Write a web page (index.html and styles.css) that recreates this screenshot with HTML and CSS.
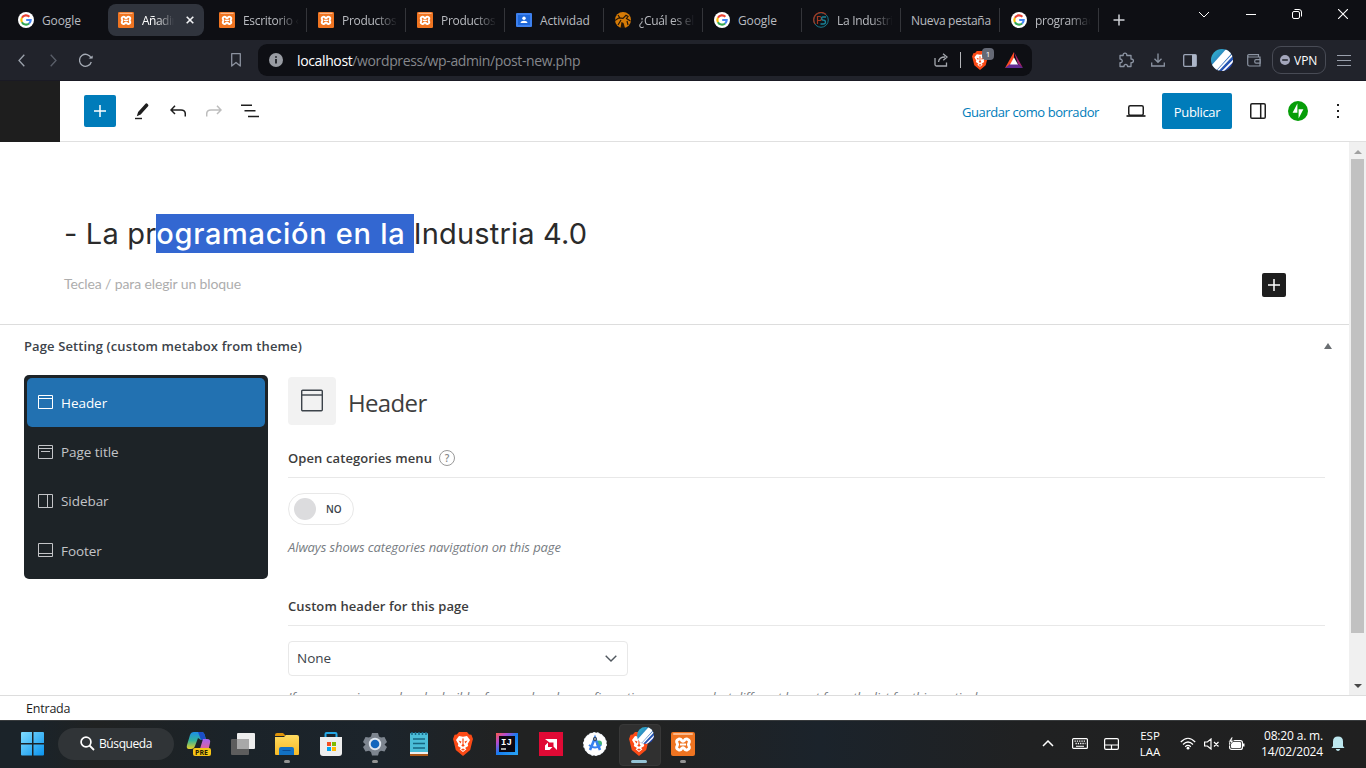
FILE: index.html
```html
<!DOCTYPE html>
<html lang="es">
<head>
<meta charset="utf-8">
<title>Añadir nueva entrada</title>
<link rel="stylesheet" href="styles.css">
</head>
<body>
<svg class="defs" width="0" height="0">
  <defs>
    <linearGradient id="blue" x1="0" y1="0" x2="1" y2="1"><stop offset="0" stop-color="#7fdcff"/><stop offset="1" stop-color="#0a93ee"/></linearGradient>
    <linearGradient id="profile" x1="0" y1="0" x2="1" y2="1"><stop offset=".2" stop-color="#2fa5c8"/><stop offset=".8" stop-color="#2547b0"/></linearGradient>
    <linearGradient id="ij" x1="0" y1="0" x2="1" y2="1"><stop offset="0" stop-color="#ff5b45"/><stop offset=".25" stop-color="#b34bd0"/><stop offset=".5" stop-color="#167cf0"/><stop offset="1" stop-color="#2ba7f5"/></linearGradient>
    <linearGradient id="cop1" x1="0" y1="0" x2="0" y2="1"><stop offset="0" stop-color="#1b8fe8"/><stop offset=".5" stop-color="#35b39a"/><stop offset="1" stop-color="#e8d024"/></linearGradient>
    <linearGradient id="cop2" x1="0" y1="0" x2="0" y2="1"><stop offset="0" stop-color="#a563f0"/><stop offset="1" stop-color="#f2657a"/></linearGradient>
    <linearGradient id="folder" x1="0" y1="0" x2="0" y2="1"><stop offset="0" stop-color="#ffdb60"/><stop offset="1" stop-color="#f7b925"/></linearGradient>
  </defs>
  <symbol id="google" viewBox="0 0 16 16"><circle cx="8" cy="8" r="8" fill="#fff"/><g fill="none" stroke-width="2.1"><path d="M11.4 4.8A4.7 4.7 0 0 0 3.9 5.8" stroke="#ea4335"/><path d="M3.9 5.8a4.7 4.7 0 0 0 0 4.4" stroke="#fbbc05"/><path d="M3.9 10.2a4.7 4.7 0 0 0 7.2 1.3" stroke="#34a853"/><path d="M11.1 11.5A4.7 4.7 0 0 0 12.7 8H8.2" stroke="#4285f4"/></g></symbol>
  <symbol id="xampp" viewBox="0 0 24 24"><rect width="24" height="24" rx="2" fill="#ef7421"/><rect x="2" y="1" width="20" height="2" rx="1" fill="#f9b78a"/><path d="M7.500 7.300q2.500-.8 3.300 1.400 1.200 1 2.400 0 .8-2.200 3.300-1.400 3 1.200 1.200 4.200-.7 1 0 2 1.800 3-1.200 4.200-2.500.8-3.300-1.400-1.200-1-2.400 0-.8 2.200-3.300 1.400-3-1.200-1.200-4.200.7-1 0-2-1.800-3 1.200-4.200z" fill="none" stroke="#fff" stroke-width="3" stroke-linejoin="round"/><path d="M9 12.500h6" stroke="#fff" stroke-width="2"/></symbol>
  <symbol id="brave" viewBox="0 0 20 24"><path d="M6 0h8l2.200 2.400 2.200.4L20 7l-.6 2-2.200 9L10 24l-7.200-6L.6 9 0 7l1.600-4.200 2.200-.4z" fill="#fb4a16"/><path d="M6 4l4 .8L14 4l3 4-2.300 4 .5 2-3.200 2 1.400 1.300L10 20l-3.400-2.700L8 16l-3.200-2 .5-2L3 8z" fill="#fff"/><path d="M5.500 8.500l3 1-1 2zM14.500 8.500l-3 1 1 2zM9.300 6.500h1.400L10.500 12l1.200 1.800L10 14.700l-1.700-.9L9.500 12zM8 17.500l2-1 2 1-2 1.300z" fill="#fb4a16"/></symbol>
  <symbol id="avatar" viewBox="0 0 22 22"><clipPath id="disc"><circle cx="11" cy="11" r="11"/></clipPath><g clip-path="url(#disc)"><path d="M0 0h22v22H0z" fill="url(#profile)"/><path d="M1 21L19 1" stroke="#fff" stroke-width="7"/><path d="M6.500 22L23 4.500M10 24L25 9" stroke="#fff" stroke-width="1.700"/></g></symbol>
</svg>

<div class="tabs">
  <div class="tab first"><svg class="fav"><use href="#google"/></svg><span>Google</span></div>
  <div class="tab active"><svg class="fav"><use href="#xampp"/></svg><span class="fade">Añadir</span><svg class="tabx" viewBox="0 0 8 8"><path d="M.7.700l6.600 6.600M7.300.700L.7 7.300" stroke="#f2f3f5" stroke-width="1.600"/></svg></div>
  <div class="tab line"><svg class="fav"><use href="#xampp"/></svg><span class="fade">Escritorio ‹</span></div>
  <div class="tab line"><svg class="fav"><use href="#xampp"/></svg><span class="fade">Productos</span></div>
  <div class="tab line"><svg class="fav"><use href="#xampp"/></svg><span class="fade">Productos</span></div>
  <div class="tab line"><svg class="fav" viewBox="0 0 16 16"><rect y="1" width="16" height="14" rx="1" fill="#3d80ee"/><rect x="2" y="3" width="12" height="10" fill="#1e67d8"/><circle cx="8" cy="6.300" r="1.700" fill="#fff"/><path d="M4.500 11c.3-3 6.700-3 7 0z" fill="#fff"/></svg><span class="soft">Actividad</span></div>
  <div class="tab line"><svg class="fav" viewBox="0 0 16 16"><circle cx="8" cy="8" r="8" fill="#d77b06"/><path d="M0 8.500l4-2.700 4 .5 3-3 2 1.200-1.500 2L15.500 9M5 6L3 3M3 13l3-5M12 9l1 4" fill="none" stroke="#241608" stroke-width="1.200"/><path d="M5.500 16l1-6 2 1 1.500 5z" fill="#241608"/></svg><span class="fade">¿Cuál es el</span></div>
  <div class="tab line"><svg class="fav"><use href="#google"/></svg><span>Google</span></div>
  <div class="tab line"><svg class="fav" viewBox="0 0 16 16"><circle cx="8" cy="8" r="7.300" fill="#101318" stroke="#18778a"/><path d="M2 12A7.300 7.300 0 0 1 13 2.500M4.500 12V4.500h2q2 0 2 2t-2 2h-2" fill="none" stroke="#a6371f" stroke-width="1.200"/><path d="M13 5H9.500Q7.800 6 9.500 8q3 0 3 2t-2 2H7.500" fill="none" stroke="#198398" stroke-width="1.300"/></svg><span class="fade">La Industri</span></div>
  <div class="tab line nofav"><span class="plain">Nueva pestaña</span></div>
  <div class="tab line"><svg class="fav"><use href="#google"/></svg><span class="fade">programac</span></div>
  <svg class="newtab" viewBox="0 0 12 12"><path d="M6 .5v11M.5 6h11" stroke="#d0d2d6" stroke-width="1.500"/></svg>
  <div class="winbtns">
    <svg width="12" height="7" viewBox="0 0 12 7"><path d="M1 1l5 5 5-5" fill="none" stroke="#fff"/></svg>
    <svg width="10" height="7" viewBox="0 0 10 7"><path d="M0 3.500h10" stroke="#fff"/></svg>
    <svg width="10" height="10" viewBox="0 0 10 10"><rect x=".5" y="2.500" width="7" height="7" rx="1.500" fill="none" stroke="#fff"/><path d="M2.500.500H7a2.500 2.500 0 0 1 2.500 2.500v4.500" fill="none" stroke="#fff"/></svg>
    <svg width="10" height="10" viewBox="0 0 10 10"><path d="M0 0l10 10M10 0L0 10" stroke="#fff" stroke-width="1.100"/></svg>
  </div>
</div>

<div class="toolbar">
  <div class="nav">
    <svg width="7" height="13" viewBox="0 0 7 13"><path d="M6.300.700L1 6.500l5.300 5.800" fill="none" stroke="#9ba1ab" stroke-width="1.300"/></svg>
    <svg width="7" height="13" viewBox="0 0 7 13"><path d="M.7.700L6 6.500.7 12.300" fill="none" stroke="#5a5f69" stroke-width="1.300"/></svg>
    <svg width="14" height="14" viewBox="0 0 14 14"><path d="M12.200 5.300A6 6 0 1 0 12.300 9" fill="none" stroke="#a6acb6" stroke-width="1.300"/><path d="M9.500 5.500h4.200V2.500z" fill="#a6acb6"/></svg>
  </div>
  <svg class="bookmark" width="10" height="14" viewBox="0 0 10 14"><path d="M.7.700h8.600v12.300L5 9.500.7 13z" fill="none" stroke="#8b919e" stroke-width="1.300" stroke-linejoin="round"/></svg>
  <div class="address">
    <svg width="14" height="14" viewBox="0 0 14 14"><circle cx="7" cy="7" r="7" fill="#999ca3"/><path d="M7 6v4.500M7 3.200v1.600" stroke="#17191e" stroke-width="1.700"/></svg>
    <span class="url"><b>localhost</b>/wordpress/wp-admin/post-new.php</span>
    <svg class="share" width="15" height="14" viewBox="0 0 15 14"><path d="M1 5v6.500q0 1.500 1.500 1.500h10V9.500M4.500 9Q5 4 11 4M9 .7L13 4 9.300 7.200" fill="none" stroke="#a5a8ae" stroke-width="1.300"/></svg>
    <i class="bar"></i>
    <div class="shield"><svg width="16" height="19"><use href="#brave"/></svg><span class="count">1</span></div>
    <svg width="18" height="16" viewBox="0 0 18 16"><path d="M9 0L0 16l9-4.500z" fill="#ff4b24"/><path d="M9 0l9 16-5-4z" fill="#a3226f"/><path d="M0 16l5-4h8l5 4z" fill="#622b94"/><path d="M9 5.500l4 7H5z" fill="#fff"/></svg>
  </div>
  <div class="exts">
    <svg width="16" height="16" viewBox="0 0 16 16"><path d="M2 3.500h3.200C4.800.200 9.200.200 8.800 3.500H13V7c3.200-.3 3.200 4 0 3.700v3.800H9.500c.3-2.800-3.800-2.800-3.500 0H2v-3.800C5 11 5 7 2 7z" fill="none" stroke="#8c94a2" stroke-width="1.300" stroke-linejoin="round"/></svg>
    <svg width="14" height="14" viewBox="0 0 14 14"><path d="M7 .5v8.500M3.500 5.800L7 9.300l3.500-3.500M.7 9.500V13h12.600V9.500" fill="none" stroke="#8c94a2" stroke-width="1.300"/></svg>
    <svg width="14" height="13" viewBox="0 0 14 13"><rect x=".7" y=".7" width="12.600" height="11.600" rx="1" fill="none" stroke="#9da6b8" stroke-width="1.300"/><path d="M9 1h4v11H9z" fill="#adb6c8"/></svg>
    <svg width="22" height="22"><use href="#avatar"/></svg>
    <svg width="14" height="13" viewBox="0 0 14 13"><path d="M13 4V3H2Q.7 3 .7 1.800T2 .7h9.500v2M.7 1.800v8.400q0 1.800 1.800 1.800H13V4M13.300 5.700H9q-1.300 0-1.300 1.700T9 9.100h4.300z" fill="none" stroke="#8c94a2" stroke-width="1.200"/></svg>
    <div class="vpn"><svg width="10" height="10" viewBox="0 0 10 10"><circle cx="5" cy="5" r="5" fill="#a3a6bb"/><path d="M2.200 5h5.600" stroke="#272a33" stroke-width="1.600"/></svg><span>VPN</span></div>
    <svg width="14" height="12" viewBox="0 0 14 12"><path d="M0 1.500h14M0 6.500h14M0 11.500h14" stroke="#9aa0ac" stroke-width="1.200"/></svg>
  </div>
</div>

<div class="wphead">
  <div class="wplogo"></div>
  <div class="add"><svg width="12" height="12" viewBox="0 0 12 12"><path d="M6 0v12M0 6h12" stroke="#fff" stroke-width="1.500"/></svg></div>
  <svg class="pencil" width="14" height="17" viewBox="0 0 14 17"><path d="M1.800 13.200l1.300-4.300L10.300 1q1-1.200 2.300-.1t.5 2.400L5.700 11.500z" fill="#1e1e1e"/><path d="M0 15.500h7" stroke="#1e1e1e" stroke-width="1.400"/></svg>
  <svg class="undo" width="16" height="12" viewBox="0 0 16 12"><path d="M5 .8L1 5l4 4M1 5h10q4.300 0 4.300 4v2.500" fill="none" stroke="#1e1e1e" stroke-width="1.500"/></svg>
  <svg class="redo" width="16" height="12" viewBox="0 0 16 12"><path d="M11 .8L15 5l-4 4M15 5H5Q.7 5 .7 9v2.500" fill="none" stroke="#bdbdbd" stroke-width="1.500"/></svg>
  <svg class="outline" width="18" height="14" viewBox="0 0 18 14"><path d="M0 1.300h11M3.500 6.800h11M7 12.400h11" stroke="#1e1e1e" stroke-width="1.500"/></svg>
  <div class="wpright">
    <span class="draft">Guardar como borrador</span>
    <svg width="20" height="12" viewBox="0 0 20 12"><rect x="2.750" y=".75" width="14.500" height="9.500" rx="1.500" fill="none" stroke="#1e1e1e" stroke-width="1.500"/><path d="M.5 11h19" stroke="#1e1e1e" stroke-width="1.700"/></svg>
    <span class="publish">Publicar</span>
    <svg class="panelicon" width="16" height="16" viewBox="0 0 16 16"><path d="M2 .75h12q1.250 0 1.250 1.250v12q0 1.250-1.250 1.250H2Q.75 15.250.75 14V2Q.75.750 2 .750zM10.700 1v14" fill="none" stroke="#1e1e1e" stroke-width="1.500"/></svg>
    <svg class="jet" width="20" height="20" viewBox="0 0 20 20"><circle cx="10" cy="10" r="10" fill="#069e08"/><path d="M9.400 2.500v9.200H4.600zM10.600 17.500V8.300h4.800z" fill="#fff"/></svg>
    <svg class="dots" width="4" height="14" viewBox="0 0 4 14"><path d="M1 0h2v2H1zM1 6h2v2H1zM1 12h2v2H1z" fill="#1e1e1e"/></svg>
  </div>
</div>

<div class="workspace">
  <main class="canvas">
    <h1 class="title">- La pr<mark>ogramación en la </mark>Industria 4.0</h1>
    <div class="block"><span class="placeholder">Teclea / para elegir un bloque</span><div class="inserter"><svg width="12" height="12" viewBox="0 0 12 12"><path d="M6 0v12M0 6h12" stroke="#fff" stroke-width="1.500"/></svg></div></div>
    <section class="metabox">
      <div class="metatitle"><h2>Page Setting (custom metabox from theme)</h2><svg width="8" height="6" viewBox="0 0 8 6"><path d="M4 0l4 6H0z" fill="#6a6e72"/></svg></div>
      <div class="metabody">
        <nav class="side">
          <div class="item on"><svg class="lay" viewBox="0 0 15 15"><path d="M.5.500h14v13H.5zM.5 3.500h14"/></svg><span>Header</span></div>
          <div class="item"><svg class="lay" viewBox="0 0 15 15"><path d="M.5.500h14v13H.5zM.5 3.500h14M3 6.500h9"/></svg><span>Page title</span></div>
          <div class="item"><svg class="lay" viewBox="0 0 15 15"><path d="M.5.500h14v13H.5zM9.500.500v13"/></svg><span>Sidebar</span></div>
          <div class="item"><svg class="lay" viewBox="0 0 15 15"><path d="M.5.500h14v13H.5zM.5 10.500h14"/></svg><span>Footer</span></div>
        </nav>
        <div class="fields">
          <div class="heading"><div class="hicon"><svg width="24" height="24" viewBox="0 0 24 24"><rect x="1.700" y="1.200" width="20.600" height="20.600" rx="1" fill="none" stroke="#3c434a" stroke-width="1.400"/><path d="M2 6h20" stroke="#3c434a" stroke-width="1.400"/></svg></div><h3>Header</h3></div>
          <div class="label l1"><span>Open categories menu</span><i class="help">?</i></div>
          <div class="switch"><i></i><span>NO</span></div>
          <p class="desc">Always shows categories navigation on this page</p>
          <div class="label l2"><span>Custom header for this page</span></div>
          <div class="select"><span>None</span><svg width="12" height="7" viewBox="0 0 12 7"><path d="M.7.700L6 6l5.300-5.300" fill="none" stroke="#50575e" stroke-width="1.400"/></svg></div>
          <p class="desc cut">If you are using our header builder for your header configuration, you can select different layout from the list for this particular page</p>
        </div>
      </div>
    </section>
  </main>
  <div class="scroll"><svg width="8" height="4" viewBox="0 0 8 4"><path d="M4 0l4 4H0z" fill="#a0a0a0"/></svg><div class="thumb"></div><svg class="down" width="8" height="4" viewBox="0 0 8 4"><path d="M4 4L0 0h8z" fill="#484848"/></svg></div>
</div>
<div class="crumb">Entrada</div>

<div class="taskbar">
  <svg class="start" width="24" height="24" viewBox="0 0 24 24"><path d="M0 1q0-1 1-1h10v11H0zM12.500 0H22q1 0 1 1v10H12.500zM0 12.500h11v11H1q-1 0-1-1zM12.500 12.500H23v10q0 1-1 1h-9.500z" fill="url(#blue)"/></svg>
  <div class="search"><svg width="15" height="15" viewBox="0 0 15 15"><circle cx="6" cy="6" r="4.900" fill="none" stroke="#fff" stroke-width="1.700"/><path d="M9.500 9.500l4.500 4.500" stroke="#fff" stroke-width="1.800"/></svg><span>Búsqueda</span></div>
  <div class="apps">
    <div class="app"><svg width="26" height="26" viewBox="0 0 26 26"><path d="M8 1h8q2 0 3 4l1 4h-5l-3-2-3 8q-1 3-4 3H3q-3 0-2-4L4 4q1-3 4-3z" fill="url(#cop1)"/><path d="M12 1h4q2 0 3 4l1 4h-5z" fill="#1b4ec8"/><path d="M17 8h4q4 0 3 4l-2 9h-9z" fill="url(#cop2)"/><rect x="7" y="17" width="18" height="8" rx="2" fill="#f7c516"/><text class="pre" x="9" y="23.800">PRE</text></svg></div>
    <div class="app"><svg width="24" height="24" viewBox="0 0 24 24"><rect x="6" y="1" width="18" height="16" rx="1" fill="#ededed"/><rect x="0" y="7" width="18" height="16" rx="1" fill="#5d5d5d"/><path d="M6 7h12v10H6z" fill="#a8a8a8"/></svg></div>
    <div class="app run"><svg width="24" height="24" viewBox="0 0 24 24"><path d="M0 3q0-2 2-2h6l3 3H0z" fill="#df9308"/><path d="M0 5h9l2-2h11q2 0 2 2v17q0 1-1 1H1q-1 0-1-1z" fill="url(#folder)"/><path d="M4 23v-6q0-2 2-2h11q2 0 2 2v6z" fill="#1271c4"/><path d="M7.500 18.500h8" stroke="#0b4c94"/></svg></div>
    <div class="app"><svg width="24" height="24" viewBox="0 0 24 24"><path d="M6.500 6V2q0-1 1-1h9q1 0 1 1v4" fill="none" stroke="#25a7e5" stroke-width="2"/><path d="M1 5h22v16q0 3-3 3H4q-3 0-3-3z" fill="#eee"/><path d="M8 10h4v4H8z" fill="#f25022"/><path d="M13 10h4v4h-4z" fill="#7fba00"/><path d="M8 15h4v4H8z" fill="#00a4ef"/><path d="M13 15h4v4h-4z" fill="#ffb900"/></svg></div>
    <div class="app run"><svg width="24" height="24" viewBox="0 0 24 24"><path d="M9 1h6l1 3.500 2 1L21.500 5 24 10l-2.500 2.500L24 15l-2.500 4.500-3.500-.7-2 1.200-1 3.500H9L8 20l-2-1.200-3.500.7L0 15l2.500-2.500L0 10l2.500-5 3.500.5 2-1z" fill="#7d858f"/><circle cx="12" cy="12" r="6.200" fill="#dfe6ee"/><circle cx="12" cy="12" r="4.300" fill="#1266bd"/></svg></div>
    <div class="app"><svg width="20" height="24" viewBox="0 0 20 24"><rect x="1" y="1" width="18" height="22" rx="1" fill="#4bbdd8"/><path d="M1 20h18v2H1z" fill="#eee"/><path d="M1 22h18v2H1z" fill="#ad5919"/><path d="M4 7h12M4 11.500h12M4 16h12" stroke="#176681" stroke-width="1.500"/><path d="M3 0v3M6.500 0v3M10 0v3M13.500 0v3M17 0v3" stroke="#17698a" stroke-width="1.500"/></svg></div>
    <div class="app"><svg width="20" height="24"><use href="#brave"/></svg></div>
    <div class="app"><svg width="22" height="22" viewBox="0 0 22 22"><rect width="22" height="22" fill="url(#ij)"/><rect x="3" y="3" width="16" height="16" fill="#0b0712"/><path d="M5 16h5" stroke="#fff" stroke-width="1.300"/><text class="ijt" x="5" y="12">IJ</text></svg></div>
    <div class="app"><svg width="24" height="24" viewBox="0 0 24 24"><rect width="24" height="24" fill="#e00a35"/><path d="M6 7h12v11l-3.500-3.500v-4h-4zM9 10.500V15h4.500L10.500 18H6v-4.500z" fill="#fff"/></svg></div>
    <div class="app"><svg width="24" height="24" viewBox="0 0 24 24"><circle cx="12" cy="12" r="11.500" fill="#fff" stroke="#e7f0f8" stroke-dasharray="2 2"/><circle cx="16" cy="11.500" r="3" fill="#3fb57b"/><path d="M7 18l5-12 5 12" fill="none" stroke="#3681ef" stroke-width="2.600"/><path d="M6 13q6 5 12 0" fill="none" stroke="#3681ef" stroke-width="2"/><circle cx="12" cy="7" r="2" fill="#344151"/><circle cx="12" cy="7" r=".8" fill="#fff"/></svg></div>
    <div class="app current"><svg width="20" height="24"><use href="#brave"/></svg><svg class="mini" width="17" height="17"><use href="#avatar"/></svg></div>
    <div class="app run"><svg width="24" height="24"><use href="#xampp"/></svg></div>
  </div>
  <div class="tray">
    <svg width="12" height="7" viewBox="0 0 12 7"><path d="M1 6l5-5 5 5" fill="none" stroke="#fff" stroke-width="1.500"/></svg>
    <svg class="kb" width="16" height="11" viewBox="0 0 16 11"><rect x=".6" y=".6" width="14.800" height="9.800" rx="1" fill="none" stroke="#fff" stroke-width="1.200"/><path d="M2.500 3.200h11M3.500 5.500h10" stroke="#fff" stroke-width="1.300" stroke-dasharray="1.300 1"/><path d="M4 8.300h8" stroke="#fff"/></svg>
    <svg class="tp" width="15" height="12" viewBox="0 0 15 12"><path d="M2 .6h11q1.400 0 1.400 1.400v8q0 1.400-1.400 1.400H2Q.6 11.400.6 10V2Q.6.600 2 .600zM1 7h13M7.500 7v4" fill="none" stroke="#fff" stroke-width="1.200"/></svg>
    <div class="lang">ESP<br>LAA</div>
    <svg class="wifi" width="16" height="13" viewBox="0 0 16 13"><path d="M.8 5q7.200-7.500 14.400 0M3 7.500q5-5 10 0M5.200 9.700q2.800-2.600 5.600 0" fill="none" stroke="#fff" stroke-width="1.200"/><circle cx="8" cy="11.200" r="1.400" fill="#fff"/></svg>
    <svg class="vol" width="16" height="12" viewBox="0 0 16 12"><path d="M.6 4h2.800L7 1v10L3.400 8H.6zM10 4l4.500 4.500M14.500 4L10 8.500" fill="none" stroke="#fff" stroke-width="1.200"/></svg>
    <svg class="bat" width="17" height="13" viewBox="0 0 17 13"><rect x="1.600" y="3.600" width="12.800" height="8.800" rx="2" fill="none" stroke="#fff" stroke-width="1.200"/><rect x="3" y="5" width="10" height="6" rx="1" fill="#fff"/><path d="M15 6.500h1.500v3H15z" fill="#fff"/><path d="M3.500 0L.4 5h2.300L1.700 8.500 5.800 3.500H3.800L5 0z" fill="#fff" stroke="#202020" stroke-width=".6"/></svg>
    <div class="clock">08:20 a. m.<br>14/02/2024</div>
    <svg class="bell" width="14" height="15" viewBox="0 0 14 15"><path d="M2 10V5.500Q2 .500 7 .500t5 5V10l1.500 2H.5zM4.700 13h4.600q-.8 2-2.300 2t-2.300-2z" fill="#bde7ee"/></svg>
  </div>
</div>
</body>
</html>
```
FILE: styles.css
```css
* { box-sizing: border-box; }
body { margin: 0; width: 1366px; height: 768px; overflow: hidden; display: flex; flex-direction: column; background: #fff; font-family: "Open Sans", "Noto Sans", sans-serif; font-size: 13px; color: #3c434a; }
h1, h2, h3, p { margin: 0; }
i { font-style: normal; }
svg { flex: none; display: block; }
span { white-space: nowrap; }
.defs { position: absolute; }

.tabs { height: 40px; flex: none; display: flex; align-items: center; background: #0e0f14; color: #b9bbc0; font-size: 12px; letter-spacing: -.1px; padding-left: 7px; }
.tab { width: 99px; height: 24px; flex: none; display: flex; align-items: center; padding-left: 11px; gap: 8px; border-right: 1px solid transparent; }
.tab.first { width: 101px; padding-left: 11px; }
.tab.active { width: 96px; height: 32px; margin-right: 4px; padding-left: 10px; background: #30343d; border-radius: 8px; color: #fff; }
.tab.active .fade { width: 32px; letter-spacing: -.5px; -webkit-mask-image: linear-gradient(90deg, #000 40%, transparent); mask-image: linear-gradient(90deg, #000 40%, transparent); }
.tab.line { border-right-color: #34353a; }
.tab.nofav { padding-left: 10px; }
.tab .plain { letter-spacing: -.3px; }
.soft { letter-spacing: -.15px; }
.fav { width: 16px; height: 16px; }
.fade { width: 56px; letter-spacing: -.3px; -webkit-mask-image: linear-gradient(90deg, #000 60%, transparent); mask-image: linear-gradient(90deg, #000 60%, transparent); }
.tabx { width: 8px; height: 8px; margin-left: 4px; }
.newtab { width: 12px; height: 12px; margin-left: 14px; }
.winbtns { margin-left: auto; margin-right: 18px; padding-bottom: 12px; display: flex; align-items: center; gap: 36px; }

.toolbar { height: 41px; flex: none; display: flex; align-items: center; background: #21232b; border-bottom: 1px solid #1a1a24; }
.nav { display: flex; align-items: center; width: 230px; padding-left: 18px; gap: 25px; }
.nav svg:last-child { margin-left: -3px; }
.bookmark { margin-left: 1px; }
.address { margin-left: 17px; width: 774px; height: 32px; background: #0e0f14; border-radius: 9px; display: flex; align-items: center; padding: 0 9px 0 11px; }
.url { margin-left: 14px; font-size: 14px; letter-spacing: -.37px; color: #85878c; }
.url b { font-weight: 400; color: #fff; }
.share { margin-left: auto; }
.bar { width: 1px; height: 16px; background: #b5b6b9; margin: 0 11px; }
.shield { position: relative; margin-right: 17px; }
.count { position: absolute; left: 10px; top: -3px; width: 12px; height: 12px; border-radius: 4px; background: #656975; color: #fff; font-size: 8px; line-height: 12px; text-align: center; }
.exts { display: flex; align-items: center; margin-left: auto; padding-right: 15px; }
.exts > svg:nth-child(2) { margin-left: 17px; }
.exts > svg:nth-child(3) { margin-left: 18px; }
.exts > svg:nth-child(4) { margin-left: 14px; }
.exts > svg:nth-child(5) { margin-left: 14px; }
.exts > svg:last-child { margin-left: 11px; }
.vpn { margin-left: 11px; width: 54px; height: 28px; border: 1px solid #484b55; border-radius: 9px; display: flex; align-items: center; gap: 4px; padding-left: 7px; color: #fff; font-size: 12px; }

.wphead { height: 61px; flex: none; display: flex; align-items: center; border-bottom: 1px solid #e0e0e0; }
.wplogo { width: 60px; height: 61px; align-self: flex-start; flex: none; background: #1e1e1e; }
.add { width: 32px; height: 32px; margin-left: 24px; border-radius: 2px; background: #007cba; display: grid; place-items: center; }
.pencil { margin-left: 19px; }
.undo { margin-left: 21px; }
.redo { margin-left: 20px; }
.outline { margin-left: 19px; }
.wpright { margin-left: auto; display: flex; align-items: center; padding-right: 26px; }
.draft { color: #007cba; letter-spacing: -.42px; margin-right: 27px; padding-top: 2px; }
.publish { margin-left: 16px; width: 70px; height: 36px; border-radius: 2px; background: #007cba; color: #fff; display: grid; place-items: center; padding-top: 2px; letter-spacing: -.35px; }
.panelicon { margin-left: 18px; }
.jet { margin-left: 22px; }
.dots { margin-left: 28px; }

.workspace { height: 553px; flex: none; display: flex; }
.canvas { width: 1349px; overflow: hidden; }
.title { margin: 71px 0 0 64px; height: 42px; line-height: 42px; font-family: Inter, sans-serif; font-size: 29px; font-weight: 400; letter-spacing: .18px; color: #2b2b2b; white-space: pre; }
.title mark { display: inline-block; height: 39px; line-height: 39px; background: #3367d1; color: #fff; font-weight: 500; letter-spacing: .69px; }
.block { height: 24px; margin: 18px 63px 0 64px; display: flex; align-items: center; justify-content: space-between; }
.placeholder { font-family: Lato, sans-serif; font-size: 14px; letter-spacing: -.12px; color: #adadad; padding-bottom: 3px; }
.inserter { width: 24px; height: 24px; border-radius: 2px; background: #1e1e1e; display: grid; place-items: center; }
.metabox { margin-top: 27px; border-top: 1px solid #ddd; }
.metatitle { height: 45px; display: flex; justify-content: space-between; align-items: center; padding: 0 17px 3px 24px; }
.metatitle h2 { font-size: 13px; font-weight: 600; letter-spacing: .12px; }
.metabody { display: flex; padding-left: 24px; padding-top: 5px; }
.side { width: 244px; height: 204px; flex: none; background: #1d2327; border-radius: 5px; padding: 3px; }
.item { height: 49.400px; display: flex; align-items: center; gap: 8px; padding-left: 11px; font-size: 13.500px; letter-spacing: -.05px; color: #c3c4c7; border-radius: 5px; }
.item.on { background: #2271b1; color: #fff; }
.lay { width: 15px; height: 15px; fill: none; stroke: currentColor; }
.fields { width: 1037px; margin-left: 20px; }
.heading { display: flex; align-items: center; gap: 12px; padding-top: 2px; height: 50px; }
.hicon { width: 48px; height: 48px; border-radius: 4px; background: #f2f2f2; display: grid; place-items: center; }
.heading h3 { font-size: 24px; font-weight: 500; letter-spacing: -.65px; padding-top: 2px; color: #3e3e3e; }
.label { height: 39px; display: flex; align-items: center; gap: 7px; border-bottom: 1px solid #e8e8e8; font-weight: 600; letter-spacing: .1px; color: #3c3c3c; }
.l1 { margin-top: 14px; }
.l2 { margin-top: 30px; }
.help { width: 16px; height: 16px; border: 1px solid #999; border-radius: 50%; font-size: 10px; line-height: 14px; text-align: center; color: #888; }
.switch { margin-top: 15px; width: 66px; height: 32px; border: 1px solid #e8e8e8; border-radius: 16px; display: flex; align-items: center; gap: 10px; padding-left: 5px; font-size: 10px; font-weight: 600; }
.switch i { width: 22px; height: 22px; border-radius: 50%; background: #dcdcde; }
.desc { margin-top: 12px; height: 20px; line-height: 20px; font-style: italic; letter-spacing: -.09px; color: #777c82; white-space: nowrap; }
.desc.cut { margin-top: 11px; letter-spacing: -.2px; }
.select { margin-top: 15px; width: 340px; height: 35px; border: 1px solid #e8e8e8; border-radius: 4px; display: flex; align-items: center; justify-content: space-between; padding: 0 10px 1px 8px; font-size: 13.500px; }
.scroll { width: 17px; background: #f0f0f0; display: flex; flex-direction: column; align-items: center; padding-top: 8px; }
.thumb { width: 13px; height: 474px; margin-top: 5px; background: #c1c1c1; }
.down { margin-top: auto; margin-bottom: 7px; }
.crumb { height: 25px; flex: none; border-top: 1px solid #ddd; padding: 4px 0 0 26px; font-size: 12.500px; letter-spacing: -.2px; color: #1e1e1e; }

.taskbar { height: 48px; flex: none; border-top: 1px solid #383b3d; padding-bottom: 2px; background: linear-gradient(90deg, #1b2329 0, #1b2329 3%, #202222 7%, #1b2329 17%, #1c242b 28%, #212222 37%, #212222 48%, #1b232b 60%, #202122 75%, #202020); display: flex; align-items: center; color: #fff; font-size: 12px; }
.start { margin-left: 21px; }
.search { margin-left: 13px; width: 116px; height: 32px; border-radius: 16px; background: #303437; display: flex; align-items: center; padding-left: 22px; gap: 4px; letter-spacing: -.4px; }
.apps { display: flex; margin-left: 3px; }
.app { width: 44px; height: 45px; display: grid; place-items: center; position: relative; }
.app.run::after, .app.current::after { content: ""; position: absolute; left: 19px; bottom: 3px; width: 6px; height: 3px; border-radius: 2px; background: #939393; }
.app.current::before { content: ""; position: absolute; left: 2px; top: 3px; width: 40px; height: 40px; border-radius: 4px; background: #303030; border: 1px solid #383838; }
.app.current > svg { position: relative; }
.app.current .mini { position: absolute; left: 20px; top: 6px; }
.app.current::after { left: 14px; width: 16px; background: #95c3d5; }
.pre { font: 700 7px "Open Sans", sans-serif; fill: #241b04; }
.ijt { font: 700 9px "Liberation Mono", monospace; fill: #fff; }
.tray { margin-left: auto; display: flex; align-items: center; padding-right: 21px; }
.kb { margin-left: 18px; }
.tp { margin-left: 16px; }
.lang { width: 24px; margin-left: 19px; text-align: center; font-size: 11.500px; line-height: 16px; padding-top: 1px; }
.wifi { margin-left: 18px; }
.vol { margin-left: 8px; }
.bat { margin-left: 8px; }
.clock { width: 70px; margin-left: 8px; text-align: right; line-height: 16px; font-size: 12px; letter-spacing: -.17px; white-space: nowrap; }
.bell { margin-left: 8px; }
```
